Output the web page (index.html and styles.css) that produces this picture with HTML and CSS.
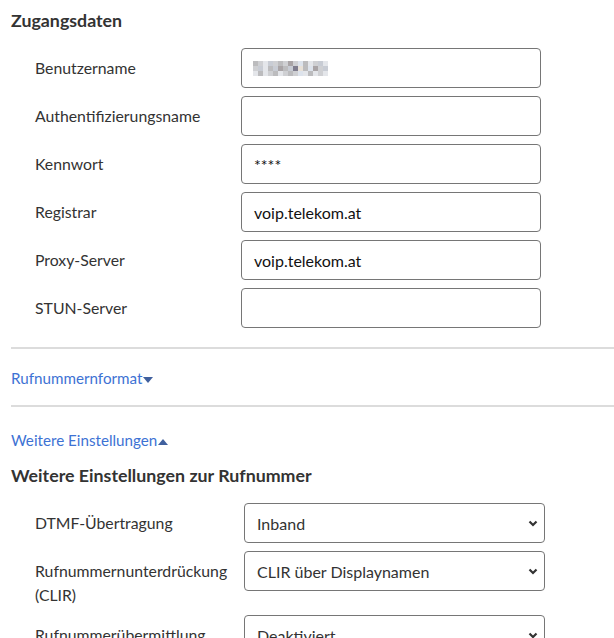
FILE: index.html
```html
<!DOCTYPE html>
<html lang="de">
<head>
<meta charset="utf-8">
<link rel="stylesheet" href="styles.css">
</head>
<body>
<div class="page">
  <h2 class="heading first">Zugangsdaten</h2>
  <div class="form">
    <div class="row">
      <label class="lbl">Benutzername</label>
      <div class="field"><span class="mosaic">
        <i class="c2"></i><i class="c1"></i><i class="c0"></i><i class="c3"></i><i class="c1"></i><i class="c2"></i><i class="c1"></i><i class="c4"></i><i class="c1"></i><i class="c5"></i><i class="c2"></i><i class="c0"></i><i class="c1"></i><i class="c3"></i><i class="c0"></i>
        <i class="c1"></i><i class="c3"></i><i class="c0"></i><i class="c2"></i><i class="c3"></i><i class="c4"></i><i class="c2"></i><i class="c3"></i><i class="c6"></i><i class="c7"></i><i class="c2"></i><i class="c5"></i><i class="c4"></i><i class="c1"></i><i class="c3"></i>
        <i class="c0"></i><i class="c2"></i><i class="c0"></i><i class="c1"></i><i class="c2"></i><i class="c0"></i><i class="c1"></i><i class="c2"></i><i class="c1"></i><i class="c5"></i><i class="c0"></i><i class="c2"></i><i class="c0"></i><i class="c1"></i><i class="c0"></i>
      </span></div>
    </div>
    <div class="row">
      <label class="lbl">Authentifizierungsname</label>
      <div class="field"></div>
    </div>
    <div class="row">
      <label class="lbl">Kennwort</label>
      <div class="field">****</div>
    </div>
    <div class="row">
      <label class="lbl">Registrar</label>
      <div class="field">voip.telekom.at</div>
    </div>
    <div class="row">
      <label class="lbl">Proxy-Server</label>
      <div class="field">voip.telekom.at</div>
    </div>
    <div class="row">
      <label class="lbl">STUN-Server</label>
      <div class="field"></div>
    </div>
  </div>

  <hr class="divider d1">
  <a class="toggle t1" href="#">Rufnummernformat<span class="tri down"></span></a>
  <hr class="divider d2">
  <a class="toggle t2" href="#">Weitere Einstellungen<span class="tri up"></span></a>

  <h2 class="heading second">Weitere Einstellungen zur Rufnummer</h2>
  <div class="form form2">
    <div class="row">
      <label class="lbl">DTMF-Übertragung</label>
      <div class="select">Inband</div>
    </div>
    <div class="row">
      <label class="lbl">Rufnummernunterdrückung (CLIR)</label>
      <div class="select">CLIR über Displaynamen</div>
    </div>
    <div class="row">
      <label class="lbl">Rufnummerübermittlung</label>
      <div class="select">Deaktiviert</div>
    </div>
  </div>
</div>
</body>
</html>
```

FILE: styles.css
```css
html, body {
  margin: 0;
  padding: 0;
  background: #ffffff;
}
body {
  font-family: Lato, "Open Sans", "Liberation Sans", sans-serif;
  color: #333333;
  font-size: 15.8px;
  overflow: hidden;
  height: 638px;
}
.page {
  padding-left: 11px;
}
.heading {
  margin: 0;
  font-size: 17.8px;
  line-height: 24px;
  font-weight: 700;
  color: #333333;
}
.heading.first {
  padding-top: 8px;
  margin-bottom: 16px;
}
.heading.second {
  margin-top: 11px;
  margin-bottom: 16px;
}
.form {
  display: flex;
  flex-direction: column;
  gap: 8px;
  padding-left: 24px;
}
.row {
  display: grid;
  grid-template-columns: 206px 300px;
  align-items: start;
}
.form2 .row {
  grid-template-columns: 209px 301px;
}
.lbl {
  padding-top: 8px;
  line-height: 24px;
  color: #333333;
  padding-right: 8px;
}
.field, .select {
  box-sizing: border-box;
  height: 40px;
  border: 1px solid #767676;
  border-radius: 4px;
  padding: 0 12px;
  display: flex;
  align-items: center;
  color: #111111;
  font-size: 16px;
}
.select {
  position: relative;
  color: #333333;
}
.select::after {
  content: "";
  position: absolute;
  right: 6px;
  top: 16px;
  width: 10px;
  height: 7px;
  background: url("data:image/svg+xml;utf8,<svg xmlns='http://www.w3.org/2000/svg' width='10' height='7' viewBox='0 0 10 7'><path d='M1.5 1.5 L5 5 L8.5 1.5' fill='none' stroke='%23333' stroke-width='2.2'/></svg>") no-repeat;
}
.mosaic {
  display: grid;
  grid-template-columns: repeat(15, 5px);
  grid-template-rows: repeat(3, 5px);
  margin-left: -1px;
}
.mosaic i { display: block; }
.c0 { background: #e4e6ea; }
.c1 { background: #cfd0d3; }
.c2 { background: #bcbcbe; }
.c3 { background: #c8ccd4; }
.c4 { background: #a9a4a6; }
.c5 { background: #dde3ec; }
.c6 { background: #7f7d8e; }
.c7 { background: #e8e1d8; }
.divider {
  border: 0;
  border-top: 2px solid #dcdcdc;
  margin: 0;
}
.d1 { margin-top: 19px; }
.t1 { margin-top: 17px; }
.d2 { margin-top: 15px; }
.t2 { margin-top: 21px; }
.toggle {
  display: block;
  line-height: 24px;
  font-size: 15.2px;
  color: #3d72d4;
  text-decoration: none;
}
.tri {
  display: inline-block;
  width: 0;
  height: 0;
  margin-left: 1px;
  vertical-align: middle;
  border-left: 5px solid transparent;
  border-right: 5px solid transparent;
}
.tri.down {
  border-top: 6px solid #40609e;
}
.tri.up {
  border-bottom: 6px solid #40609e;
}
```
